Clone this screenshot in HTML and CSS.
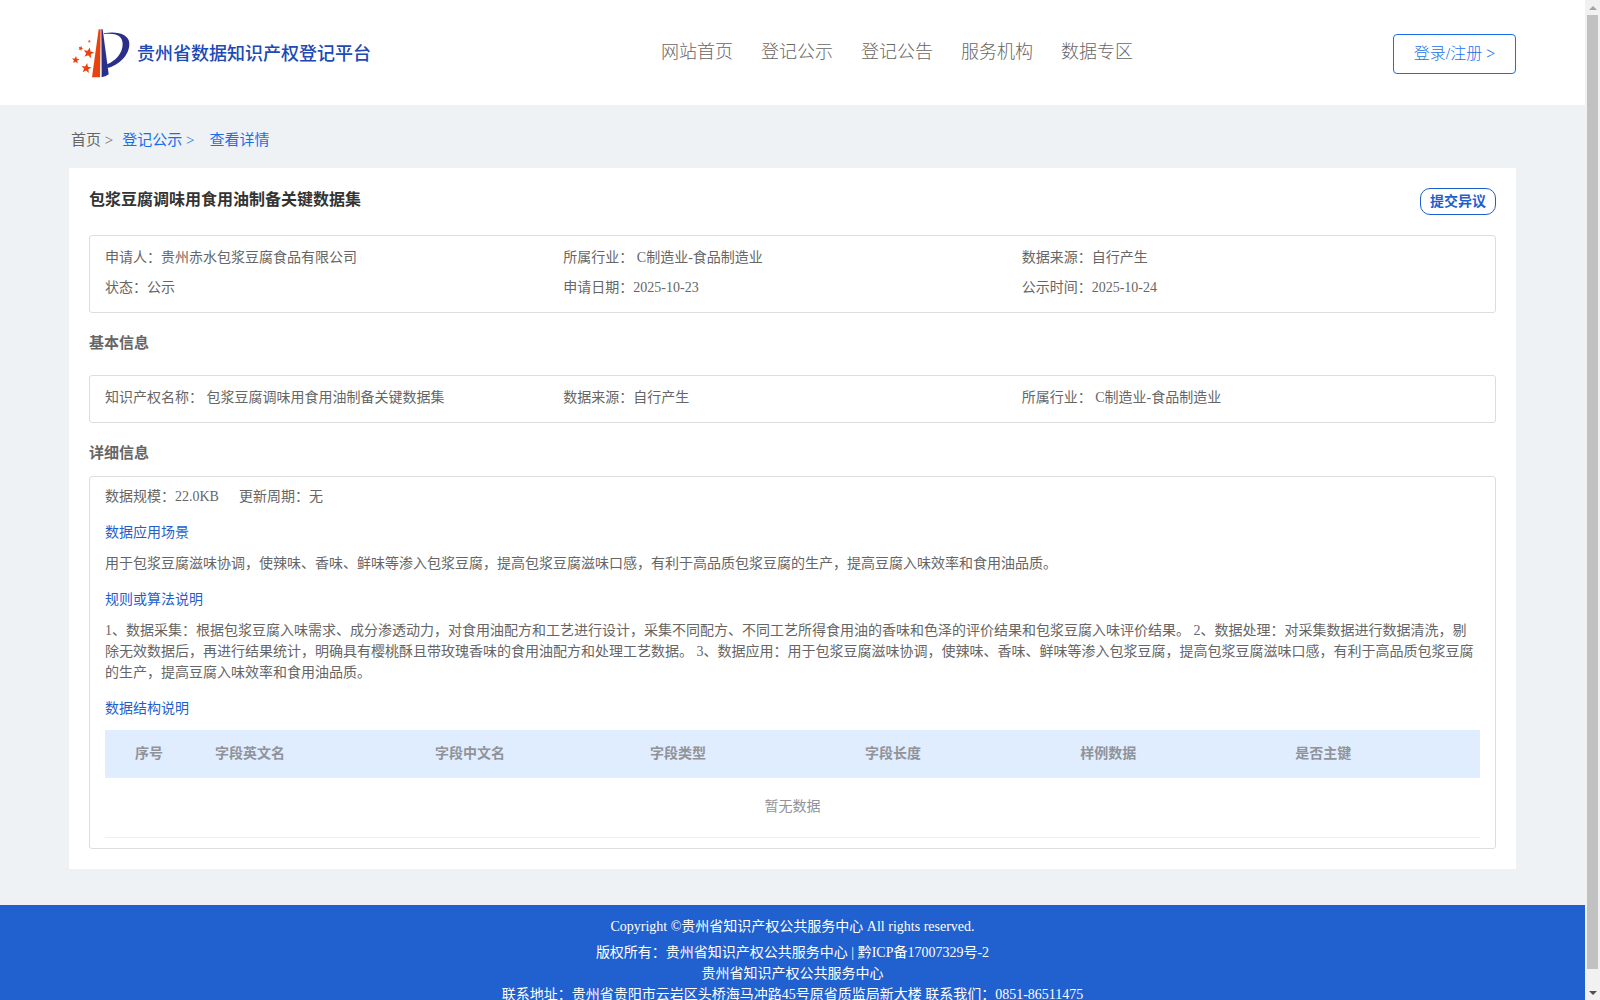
FILE: index.html
```html
<!DOCTYPE html>
<html lang="zh-CN">
<head>
<meta charset="utf-8">
<meta name="viewport" content="width=device-width, initial-scale=1">
<title>贵州省数据知识产权登记平台</title>
<link rel="stylesheet" href="styles.css">
</head>
<body>
<div class="viewport">
  <div class="page">
    <header class="header">
      <a class="brand" href="#">
        <svg class="brand-logo" viewBox="0 0 174 147" aria-hidden="true">
          <defs><path id="star" d="M0-10 2.6-3.3 9.5-3.1 4.1 1.3 5.9 8.1 0 4.2-5.9 8.1-4.1 1.3-9.5-3.1-2.6-3.3Z"/></defs>
          <g fill="#e8430f">
            <path d="M80 1h6l-2 144H60Z"/>
            <use href="#star" transform="translate(50 72) rotate(12) scale(1.7)"/>
            <use href="#star" transform="translate(11 93) rotate(5) scale(1.2)"/>
            <use href="#star" transform="translate(43 118) rotate(8) scale(1.6)"/>
            <use href="#star" transform="translate(26 58) rotate(20) scale(.8)"/>
            <use href="#star" transform="translate(52 37) scale(.5)"/>
          </g>
          <g fill="#2a3089">
            <path d="M88 1h4l18 135q-10 8-21 9Z"/>
            <path d="M96 13C135 5 172 16 172 44c0 36-32 64-66 73l-1-11c25-10 47-32 47-61 0-27-24-34-56-30Z"/>
          </g>
        </svg>
        <span class="brand-name">贵州省数据知识产权登记平台</span>
      </a>
      <nav class="nav">
        <a href="#">网站首页</a>
        <a href="#">登记公示</a>
        <a href="#">登记公告</a>
        <a href="#">服务机构</a>
        <a href="#">数据专区</a>
      </nav>
      <button class="login" type="button">登录/注册 &gt;</button>
    </header>

    <nav class="crumbs">
      <a class="crumb-home" href="#">首页 &gt;</a>
      <a href="#">登记公示 &gt;</a>
      <a class="crumb-current" href="#">查看详情</a>
    </nav>

    <main class="card">
      <div class="card-head">
        <h1>包浆豆腐调味用食用油制备关键数据集</h1>
        <button class="objection" type="button">提交异议</button>
      </div>
      <div class="box grid">
        <div>申请人：贵州赤水包浆豆腐食品有限公司</div>
        <div>所属行业： C制造业-食品制造业</div>
        <div>数据来源：自行产生</div>
        <div>状态：公示</div>
        <div>申请日期：2025-10-23</div>
        <div>公示时间：2025-10-24</div>
      </div>
      <h2>基本信息</h2>
      <div class="box grid">
        <div>知识产权名称： 包浆豆腐调味用食用油制备关键数据集</div>
        <div>数据来源：自行产生</div>
        <div>所属行业： C制造业-食品制造业</div>
      </div>
      <h2 class="tight">详细信息</h2>
      <div class="box detail">
        <div class="facts"><span>数据规模：22.0KB</span><span>更新周期：无</span></div>
        <h3>数据应用场景</h3>
        <p>用于包浆豆腐滋味协调，使辣味、香味、鲜味等渗入包浆豆腐，提高包浆豆腐滋味口感，有利于高品质包浆豆腐的生产，提高豆腐入味效率和食用油品质。</p>
        <h3>规则或算法说明</h3>
        <p>1、数据采集：根据包浆豆腐入味需求、成分渗透动力，对食用油配方和工艺进行设计，采集不同配方、不同工艺所得食用油的香味和色泽的评价结果和包浆豆腐入味评价结果。 2、数据处理：对采集数据进行数据清洗，剔除无效数据后，再进行结果统计，明确具有樱桃酥且带玫瑰香味的食用油配方和处理工艺数据。 3、数据应用：用于包浆豆腐滋味协调，使辣味、香味、鲜味等渗入包浆豆腐，提高包浆豆腐滋味口感，有利于高品质包浆豆腐的生产，提高豆腐入味效率和食用油品质。</p>
        <h3>数据结构说明</h3>
        <table class="fields">
          <colgroup><col class="col-index"><col class="col-name"><col class="col"><col class="col"><col class="col"><col class="col"><col></colgroup>
          <thead>
            <tr><th class="index">序号</th><th>字段英文名</th><th>字段中文名</th><th>字段类型</th><th>字段长度</th><th>样例数据</th><th>是否主键</th></tr>
          </thead>
          <tbody>
            <tr><td colspan="7">暂无数据</td></tr>
          </tbody>
        </table>
      </div>
    </main>

    <footer class="footer">
      <p class="copyright">Copyright ©贵州省知识产权公共服务中心 All rights reserved.</p>
      <p>版权所有：贵州省知识产权公共服务中心 | 黔ICP备17007329号-2</p>
      <p>贵州省知识产权公共服务中心</p>
      <p>联系地址：贵州省贵阳市云岩区头桥海马冲路45号原省质监局新大楼 联系我们：0851-86511475</p>
    </footer>
  </div>

  <div class="scrollbar" aria-hidden="true">
    <span class="arrow up"></span>
    <span class="thumb"></span>
    <span class="arrow down"></span>
  </div>
</div>
</body>
</html>
```
FILE: styles.css
```css
* { box-sizing: border-box; }

body {
  margin: 0;
  font: 14px/21px "Liberation Serif", "Noto Sans CJK SC", serif;
  color: #666;
  background: #eef2f5;
  text-spacing-trim: space-all;
}

a { color: inherit; text-decoration: none; }
h1, h2, h3, p { margin: 0; }
button { font: inherit; background: #fff; cursor: pointer; }

.viewport { display: flex; height: 100vh; }
.page { flex: 1; min-width: 0; overflow: hidden; }

/* header */
.header {
  display: flex;
  align-items: center;
  justify-content: space-between;
  height: 105px;
  padding: 2px 69px 0;
  background: #fff;
}
.brand { display: flex; align-items: center; gap: 7px; padding-left: 3px; }
.brand-logo { width: 58px; height: 49px; }
.brand-name { font-size: 18px; line-height: 24px; font-weight: 500; color: #2049b5; }
.nav { display: flex; gap: 28px; font-size: 18px; line-height: 24px; font-weight: 300; padding: 0 0 4px 30px; }
.login {
  width: 123px;
  height: 40px;
  padding: 0;
  border: 1px solid #1a6eee;
  border-radius: 4px;
  color: #1a6eee;
  font-size: 16px;
  font-weight: 300;
}

/* breadcrumb */
.crumbs { display: flex; gap: 9px; padding: 25px 71px 17px; font-size: 15px; color: #1a6eee; }
.crumb-home { color: #666; }
.crumb-current { padding-left: 6px; }

/* card */
.card { margin: 0 69px; padding: 20px; background: #fff; }
.card-head { display: flex; justify-content: space-between; height: 47px; }
h1 { font-size: 16px; line-height: 24px; color: #333; }
.objection {
  width: 76px;
  height: 27px;
  padding: 0;
  border: 1px solid #1f5fcd;
  border-radius: 10px;
  color: #1f5fcd;
  font-weight: 700;
  line-height: 24px;
}
h2 { padding: 20px 0 21px; font-size: 15px; line-height: 21px; }
h2.tight { padding-bottom: 12px; }

.box { border: 1px solid #ddd; border-radius: 3px; }
.grid {
  display: grid;
  grid-template-columns: repeat(3, 1fr);
  row-gap: 9px;
  padding: 11px 15px 14px;
}
.detail { padding: 9px 15px 10px; }
.facts { display: flex; gap: 20px; }
h3 { padding: 15px 0 10px; font-size: 14px; font-weight: 400; line-height: 21px; color: #1f5fcd; }

/* field table */
.fields {
  width: 100%;
  margin-top: 1px;
  table-layout: fixed;
  border-collapse: separate;
  border-spacing: 0;
  color: #909399;
}
.col-index { width: 100px; }
.col-name { width: 16%; }
.col { width: 15.64%; }
.fields th {
  height: 48px;
  padding: 0 10px 1px;
  border-bottom: 1px solid #ebeef5;
  background: #e0edff;
  text-align: left;
}
.fields .index { padding-left: 30px; }
.fields td { height: 60px; padding: 0 0 2px; border-bottom: 1px solid #ebeef5; text-align: center; }

/* footer */
.footer { margin-top: 36px; padding: 11px 0; min-height: 140px; background: #2160cf; color: #fff; text-align: center; }
.copyright { padding-bottom: 5px; }

/* scrollbar */
.scrollbar {
  display: flex;
  flex-direction: column;
  align-items: center;
  width: 15px;
  background: #f1f1f1;
}
.arrow { display: flex; align-items: center; justify-content: center; height: 15px; }
.arrow::before { content: ""; border: 4px solid transparent; }
.up::before { border-top: 0; border-bottom-color: #a3a3a3; }
.down::before { border-bottom: 0; border-top-color: #505050; }
.thumb { flex: 1; width: 11px; margin-bottom: 16px; background: #c1c1c1; }
```
